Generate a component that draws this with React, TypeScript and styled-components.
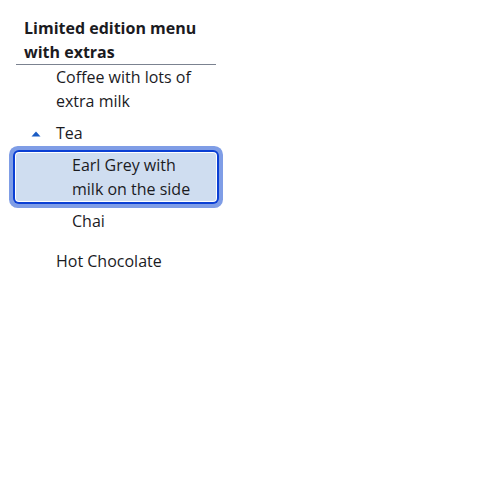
import React from 'react';
import styled, { createGlobalStyle } from 'styled-components';

const Global = createGlobalStyle`
    body {
        margin: 8px;
        background: #ffffff;
        font-family: 'Open Sans', 'Noto Sans', sans-serif;
        color: #1b1b1f;
    }
`

const Tree = styled.div`
    width: 200px;
    margin-left: 8px;
`

const Header = styled.div`
    padding: 8px 8px 0 8px;
    border-bottom: 1px solid #7b8290;
    font-size: 16px;
    font-weight: 700;
    line-height: 24px;
`

const List = styled.ul`
    list-style: none;
    margin: 0;
    padding: 0;
    display: flex;
    flex-direction: column;
    gap: 8px;
`

const Group = styled.ul`
    list-style: none;
    margin: 8px 0 0 0;
    padding: 0 0 8px 0;
    display: flex;
    flex-direction: column;
    gap: 8px;
`

const Row = styled.div<{ $level: number; $selected?: boolean }>`
    display: flex;
    align-items: flex-start;
    padding-left: ${p => 40 + (p.$level - 1) * 16}px;
    padding-right: 8px;
    font-size: 16px;
    line-height: 24px;
    position: relative;
    background: ${p => (p.$selected ? '#cfddf0' : 'transparent')};
    box-shadow: ${p =>
        p.$selected
            ? '0 0 0 1px #ffffff, 0 0 0 3px #0b3fd4, 0 0 0 7px #7f9de6'
            : 'none'};
    border-radius: ${p => (p.$selected ? '3px' : '0')};
`

const Caret = styled.svg`
    position: absolute;
    left: 15px;
    top: 10px;
`

export default function App() {
  return (
    <>
      <Global />
      <Tree>
        <Header>Limited edition menu with extras</Header>
        <List>
          <li>
            <Row $level={1}>Coffee with lots of extra milk</Row>
          </li>
          <li>
            <Row $level={1}>
              <Caret width="10" height="6" viewBox="0 0 10 6">
                <path d="M5 0.5 L9.5 5.5 L0.5 5.5 Z" fill="#1a5cc4" />
              </Caret>
              Tea
            </Row>
            <Group>
              <li>
                <Row $level={2} $selected>Earl Grey with milk on the side</Row>
              </li>
              <li>
                <Row $level={2}>Chai</Row>
              </li>
            </Group>
          </li>
          <li>
            <Row $level={1}>Hot Chocolate</Row>
          </li>
        </List>
      </Tree>
    </>
  );
}
